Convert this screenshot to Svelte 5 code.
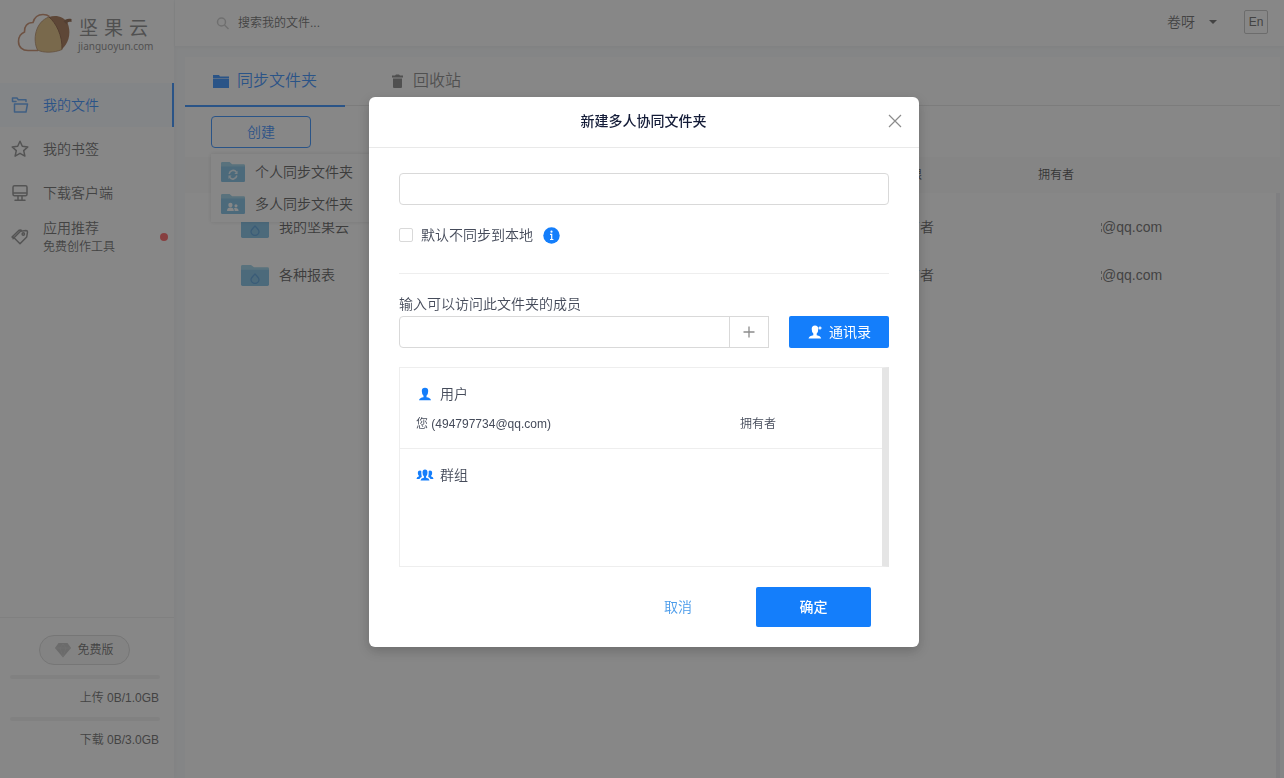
<script>
  const members = [{ name: '您 (494797734@qq.com)', role: '拥有者' }];
  const folders = [{ name: '我的坚果云' }, { name: '各种报表' }];
  let folderName = $state('');
  let member = $state('');
  let skipSync = $state(false);
</script>

{#snippet folder(kind, size)}
  <svg class="folder" width={size} height={size === 24 ? 22 : 23} viewBox="0 0 28 24" preserveAspectRatio="none" aria-hidden="true">
    <path d="M0 2.500Q0 1 1.500 1H10l3 2.500h13.500Q28 3.500 28 5v8H0z" fill="#8ccbe6" />
    <path d="M0 6h28v15.500Q28 23 26.500 23h-25Q0 23 0 21.500z" fill="#6cb6e2" />
    {#if kind === 'sync'}
      <path d="M9.500 14a4.800 4.800 0 0 1 8.500-1.800M18.500 15.800a4.800 4.800 0 0 1-8.500 2" fill="none" stroke="#e2f2fb" stroke-width="1.800" />
      <path d="M19.300 10.500v3.700h-3.700zM8.700 19.500v-3.700h3.700z" fill="#e2f2fb" />
    {:else if kind === 'team'}
      <circle cx="11" cy="13" r="2.500" fill="#fff" />
      <circle cx="17.500" cy="14" r="1.800" fill="#fff" />
      <path d="M7 19.500q0-3.800 4-3.800t4 3.800zM16 19.500q0-2-1-3 5.500-1 5.500 3z" fill="#fff" />
    {:else}
      <path d="M14 10.500q4 4 4 6a4 3.600 0 0 1-8 0Q10 14.500 14 10.500z" fill="none" stroke="#3f93d6" stroke-width="1.300" />
    {/if}
  </svg>
{/snippet}

<div class="app">
  <aside>
    <div class="logo">
      <svg width="56" height="42" viewBox="0 0 56 42" aria-hidden="true">
        <path d="M21 37.500H11C5.500 37.500 1.500 34 1.500 28.500 1.500 24 4 20.500 7.500 19 7 13.500 10 9.500 16 9.500 17.500 4 21.500 1.500 26 1.500c2.500 0 5 .8 6.500 2.200" fill="none" stroke="#c17c55" stroke-width="1.600" />
        <path d="M32 4c7-2.500 15-.5 18.500 6C54 18 52.500 28 47 34l-3 3z" fill="#9a5f38" />
        <path d="M32 4C39 10 45.500 22 45 36.500 37 40 26 40 20.500 37 15.500 27 18 9 32 4z" fill="#dcb56b" />
        <path d="M32 4C39 10 45.500 22 45 36.500" fill="none" stroke="#7c4726" />
        <path d="M20.500 37C15.500 27 18 9 32 4M20.500 37c5.500 3 16.500 3 24.500-.5" fill="none" stroke="#a5744a" stroke-width=".8" />
        <path d="M46.500 8.500C48 6 51 5.300 54.500 6v3c-3-.5-4 0-4.500 2.500z" fill="#7d4b2b" />
      </svg>
      <div class="brand">
        <div class="brand-cn"><span>坚</span><span>果</span><span>云</span></div>
        <div class="brand-en">jianguoyun.com</div>
      </div>
    </div>
    <nav>
      <a class="item active" href="#files">
        <svg width="18" height="18" viewBox="0 0 18 18"><path d="M1.500 5.500V2H6l1.300 1.700H15V5.500M1.500 5.500v-1M1.500 5.500H5M3.500 8h13L15 16H3.500z" /></svg>
        <span>我的文件</span>
      </a>
      <a class="item" href="#bookmarks">
        <svg width="18" height="18" viewBox="0 0 18 18"><path d="m9 1.300 2.300 5 5.500.6-4.100 3.700 1.200 5.500L9 13.300l-4.900 2.800 1.200-5.500L1.200 6.900l5.500-.6z" /></svg>
        <span>我的书签</span>
      </a>
      <a class="item" href="#client">
        <svg width="18" height="18" viewBox="0 0 18 18"><path d="M3.500 1.700h11q1.500 0 1.500 1.500v7q0 1.500-1.500 1.500h-11Q2 11.700 2 10.200v-7q0-1.500 1.500-1.500zM2 9h14M7 12v4M11 12v4M4 16.200h10" /></svg>
        <span>下载客户端</span>
      </a>
      <a class="item" href="#apps">
        <svg width="18" height="18" viewBox="0 0 18 18"><path d="m3 9.800 6.500-6.500 5.500-.8q1.500 0 1.500 1.500L15.700 9 9 15.700 3 9.800zM3 9.800 1 9l7-6.800L10 2M3 9.800l-1 1" /><circle cx="12.300" cy="6" r="1.200" /></svg>
        <span class="two">应用推荐<small>免费创作工具</small></span>
        <i class="dot"></i>
      </a>
    </nav>
    <div class="quota">
      <button class="plan">
        <svg width="16" height="16" viewBox="0 0 16 16"><path d="M3.500 1h9L16 6l-8 9.500L0 6z" fill="#b8b8b8" /><path d="M0 6h16M5 6l3 9 3-9-3-4z" fill="none" stroke="#c8c8c8" stroke-width=".7" /></svg>
        免费版
      </button>
      <div class="bar"></div>
      <div class="amount">上传 0B/1.0GB</div>
      <div class="bar"></div>
      <div class="amount">下载 0B/3.0GB</div>
    </div>
  </aside>

  <div class="main">
    <header>
      <label class="search">
        <svg width="14" height="14" viewBox="0 0 14 14"><circle cx="5.500" cy="6" r="4" /><path d="m8.500 9 4 4" /></svg>
        <input type="text" placeholder="搜索我的文件..." aria-label="搜索我的文件" />
      </label>
      <button class="user">卷呀 <i class="caret"></i></button>
      <button class="lang">En</button>
    </header>
    <section class="panel">
      <div class="tabs">
        <button class="tab on">
          <svg width="16" height="16" viewBox="0 0 16 16"><path d="M0 2h6l1 1.500h9V5H0zM0 5.500h16V15H0z" fill="currentColor" /></svg>
          同步文件夹
        </button>
        <button class="tab">
          <svg width="16" height="16" viewBox="0 0 16 16"><path d="M3 2.500h3l1-1h3l1 1h3v2H3zM4 5.500h9v8.500q0 1-1 1H5q-1 0-1-1z" fill="currentColor" /></svg>
          回收站
        </button>
      </div>
      <div class="tools">
        <button class="create">创建</button>
        <div class="menu">
          <button>{@render folder('sync', 24)}个人同步文件夹</button>
          <button>{@render folder('team', 24)}多人同步文件夹</button>
        </div>
      </div>
      <table>
        <colgroup><col /><col class="c-role" /><col class="c-owner" /></colgroup>
        <thead>
          <tr><th></th><th>权限</th><th>拥有者</th></tr>
        </thead>
        <tbody>
          {#each folders as row}
            <tr>
              <td class="name"><div>{@render folder('nut', 28)}{row.name}</div></td>
              <td>拥有者</td>
              <td class="mail"><span>@qq.com</span></td>
            </tr>
          {/each}
        </tbody>
      </table>
      <div class="track"></div>
    </section>
  </div>
</div>

<div class="mask">
  <div class="modal" role="dialog" aria-modal="true" aria-labelledby="title">
    <div class="head">
      <h2 id="title">新建多人协同文件夹</h2>
      <button class="close" aria-label="关闭">
        <svg width="14" height="14" viewBox="0 0 14 14"><path d="m1 1 12 12M13 1 1 13" stroke="#8c8c8c" stroke-width="1.200" fill="none" /></svg>
      </button>
    </div>
    <div class="body">
      <input class="field" type="text" aria-label="文件夹名称" bind:value={folderName} />
      <div class="option">
        <input id="skip" type="checkbox" bind:checked={skipSync} />
        <label for="skip">默认不同步到本地</label>
        <svg width="17" height="17" viewBox="0 0 17 17"><circle cx="8.500" cy="8.500" r="8.200" fill="#147efb" /><path d="M7 7.300h1.700v5M7 12.500h3.400" stroke="#fff" stroke-width="1.200" fill="none" /><circle cx="8.500" cy="4.700" r="1.100" fill="#fff" /></svg>
      </div>
      <label class="caption" for="member">输入可以访问此文件夹的成员</label>
      <div class="adder">
        <div class="group">
          <input id="member" class="field" type="text" bind:value={member} />
          <button aria-label="添加"><svg width="12" height="12" viewBox="0 0 12 12"><path d="M6 .5v11M.5 6h11" stroke="#8c8c8c" stroke-width="1.300" /></svg></button>
        </div>
        <button class="book">
          <svg width="16" height="16" viewBox="0 0 16 16"><path d="M4.700 5q0-3.500 3.300-3.500t3.300 3.500q0 3-1.600 4.600v1.700q3.800.5 4.500 3.200H1.500q.8-2.700 4.800-3.200V9.600Q4.700 8 4.700 5z" fill="#fff" /><path d="m13 1.800.7 1.500 1.500.7-1.500.7-.7 1.500-.7-1.500-1.500-.7 1.500-.7z" fill="#fff" /></svg>
          通讯录
        </button>
      </div>
      <div class="list">
        <section class="users">
          <h3>
            <svg width="18" height="16" viewBox="0 0 18 16"><path d="M5.800 5Q5.800 1.700 9 1.700T12.200 5q0 3.200-1.700 4.700v1.600q3.800.5 4.500 2.900H3q.7-2.400 4.500-2.900V9.700Q5.800 8.200 5.800 5z" fill="#147efb" /></svg>
            用户
          </h3>
          {#each members as m}
            <div class="member"><span>{m.name}</span><span>{m.role}</span></div>
          {/each}
        </section>
        <section>
          <h3>
            <svg width="18" height="16" viewBox="0 0 18 16"><path d="M6.500 5.500q0-3 2.500-3t2.500 3q0 2.700-1.400 3.800v1.400q3 .3 3.400 2.800h-9q.4-2.500 3.400-2.800V9.300Q6.500 8.200 6.500 5.500z" fill="#147efb" /><path d="M5.300 4Q4.800 3.500 4 3.500q-2.200 0-2.200 2.300 0 1.900 1 2.800v1Q.7 10 .5 12h3q.7-1.400 2.200-2V9.300Q5.200 7.500 5.300 4zM12.700 4q.5-.5 1.300-.5 2.200 0 2.200 2.300 0 1.900-1 2.800v1q2.100.4 2.300 2.400h-3q-.7-1.400-2.200-2V9.300q.5-1.800.4-5.300z" fill="#147efb" /></svg>
            群组
          </h3>
        </section>
      </div>
      <div class="foot">
        <button class="cancel">取消</button>
        <button class="ok">确定</button>
      </div>
    </div>
  </div>
</div>

<style>
  :global(body) { font-family: 'Liberation Sans', 'Noto Sans CJK SC', sans-serif; font-weight: 350; font-size: 14px; line-height: 20px; color: #555; }
  * { box-sizing: border-box; }
  button, input { font: inherit; color: inherit; background: none; border: 0; padding: 0; margin: 0; }
  h2, h3 { margin: 0; }
  svg { flex: none; }
  .app { display: flex; min-height: 100vh; background: #f8fafc; }

  aside { width: 174px; flex: none; display: flex; flex-direction: column; background: #fff; box-shadow: 0 0 6px rgba(0, 0, 0, .05); }
  .logo { display: flex; align-items: center; gap: 5px; height: 83px; padding: 0 0 15px 17px; color: #777; }
  .brand-cn { display: flex; gap: 6px; font-size: 19px; line-height: 22px; font-weight: 400; padding: 2px 0 0 1px; }
  .brand-en { font: 10px/12px 'Noto Sans', sans-serif; }
  .item { display: flex; align-items: center; gap: 14px; height: 44px; padding-left: 11px; color: #555; text-decoration: none; position: relative; }
  .item svg { fill: none; stroke: #808080; stroke-width: 1.500; stroke-linejoin: round; stroke-linecap: round; }
  .item.active { color: #1880ff; background: #f4f9ff; border-right: 2px solid #1880ff; }
  .item.active svg { stroke: #4d9bf5; }
  .two { display: flex; flex-direction: column; }
  .two small { font-size: 12px; line-height: 18px; }
  .dot { position: absolute; right: 6px; top: 18px; width: 8px; height: 8px; border-radius: 50%; background: #ff4d4f; }
  .quota { margin-top: auto; padding: 17px 14px 19px 10px; border-top: 1px solid #eee; }
  .plan { display: flex; align-items: center; justify-content: center; gap: 6px; width: 91px; height: 30px; margin: 0 0 10px 29px; border: 1px solid #d4d4d4; border-radius: 15px; background: #f4f4f4; font-size: 12px; }
  .bar { height: 4px; border-radius: 2px; background: #f0f0f0; }
  .amount { font-size: 12px; line-height: 18px; padding: 10px 1px; text-align: right; }

  .main { flex: 1; min-width: 0; display: flex; flex-direction: column; padding-left: 1px; }
  header { display: flex; align-items: center; height: 46px; padding: 0 16px 2px 41px; background: #fff; box-shadow: 0 1px 4px rgba(0, 0, 0, .06); }
  .search { display: flex; align-items: center; gap: 8px; flex: 1; font-size: 12px; padding-top: 2px; }
  .search svg { fill: none; stroke: #c4c4c4; stroke-width: 1.500; }
  .search input { flex: 1; }
  .search input::placeholder { color: #555; opacity: 1; }
  .user { display: flex; align-items: center; gap: 14px; margin-right: 27px; }
  .caret { border: 4px solid transparent; border-top-color: #555; border-bottom: 0; }
  .lang { width: 24px; height: 24px; border: 1px solid #bbb; border-radius: 2px; font-size: 12px; line-height: 22px; }

  .panel { flex: 1; position: relative; margin: 11px 4px 0 10px; background: #fff; }
  .tabs { display: flex; height: 49px; border-bottom: 1px solid #e4e4e4; }
  .tab { display: flex; align-items: center; justify-content: center; gap: 8px; width: 160px; height: 50px; font-size: 16px; border-bottom: 2px solid transparent; color: #777; }
  .tab.on { color: #1880ff; border-color: #1880ff; }
  .tools { position: relative; height: 51px; padding: 10px 26px; }
  .create { width: 100px; height: 32px; border: 1px solid #1880ff; border-radius: 4px; color: #1880ff; }
  .menu { position: absolute; z-index: 1; left: 26px; top: 48px; width: 180px; padding: 2px 0; background: #fff; box-shadow: 0 0 4px rgba(0, 0, 0, .15); }
  .menu button { display: flex; align-items: center; gap: 10px; width: 100%; height: 32px; padding-left: 10px; color: #444; }
  table { width: 100%; border-collapse: collapse; table-layout: fixed; }
  .c-role { width: 146px; }
  .c-owner { width: 242px; }
  th { height: 36px; padding: 0; background: #fafafa; font-size: 12px; font-weight: 350; text-align: left; color: #333; }
  td { height: 48px; padding: 0; color: #444; }
  th:nth-child(2) { padding-left: 6px; }
  tbody::before { content: ''; display: block; height: 10px; }
  .name div { display: flex; align-items: center; gap: 10px; padding-left: 56px; }
  .mail { padding-left: 63px; color: #555; }
  .mail span { display: flex; align-items: center; }
  .mail span::before { content: ''; height: 9px; border-left: 1px dashed #888; }
  .track { position: absolute; right: 0; top: 136px; bottom: 0; width: 4px; background: #ececef; }

  .mask { position: fixed; z-index: 10; inset: 0; display: flex; justify-content: center; align-items: flex-start; padding: 97px 0 0 4px; background: rgba(55, 55, 55, .6); overflow: auto; }
  .modal { width: 550px; background: #fff; border-radius: 6px; box-shadow: 0 4px 12px rgba(0, 0, 0, .2); color: #454b5a; }
  .head { display: flex; align-items: center; height: 51px; padding: 0 17px 2px 30px; border-bottom: 1px solid #e9e9e9; }
  h2 { flex: 1; text-align: center; font-size: 14px; font-weight: 500; color: #141c38; }
  .close { display: flex; }
  .body { padding: 25px 30px 20px; }
  .field { display: block; width: 100%; height: 32px; padding: 0 8px; border: 1px solid #d9d9d9; border-radius: 4px; background: #fff; }
  .option { display: flex; align-items: center; height: 69px; padding-bottom: 8px; border-bottom: 1px solid #eee; }
  .option input { appearance: none; width: 14px; height: 14px; margin-right: 8px; border: 1px solid #d9d9d9; border-radius: 2px; }
  .option input:checked { background: #147efb; }
  .option label { margin-right: 10px; }
  .caption { display: block; margin: 20px 0 2px; }
  .adder { display: flex; gap: 20px; }
  .group { display: flex; flex: 1; }
  .group .field { flex: 1; border-radius: 4px 0 0 4px; }
  .group button { display: flex; align-items: center; justify-content: center; width: 40px; margin-left: -1px; border: 1px solid #d9d9d9; }
  .book { display: flex; align-items: center; justify-content: center; gap: 6px; width: 100px; height: 32px; border-radius: 2px; background: #147efb; color: #fff; font-weight: 400; }
  .list { height: 200px; margin-top: 19px; border: 1px solid #eee; border-right: 7px solid #e5e5e5; }
  .list section { padding: 16px; }
  .list .users { height: 81px; border-bottom: 1px solid #eee; }
  h3 { display: flex; align-items: center; gap: 6px; font-size: 14px; font-weight: 350; }
  .member { display: flex; margin-top: 10px; font-size: 12px; }
  .member span { flex: 1; }
  .member span:last-child { flex: 0 0 126px; }
  .foot { display: flex; justify-content: flex-end; gap: 50px; padding: 20px 18px 0 0; }
  .cancel { width: 56px; color: #4a9bea; }
  .ok { width: 115px; height: 40px; border-radius: 2px; background: #147efb; color: #fff; font-weight: 500; }
</style>
